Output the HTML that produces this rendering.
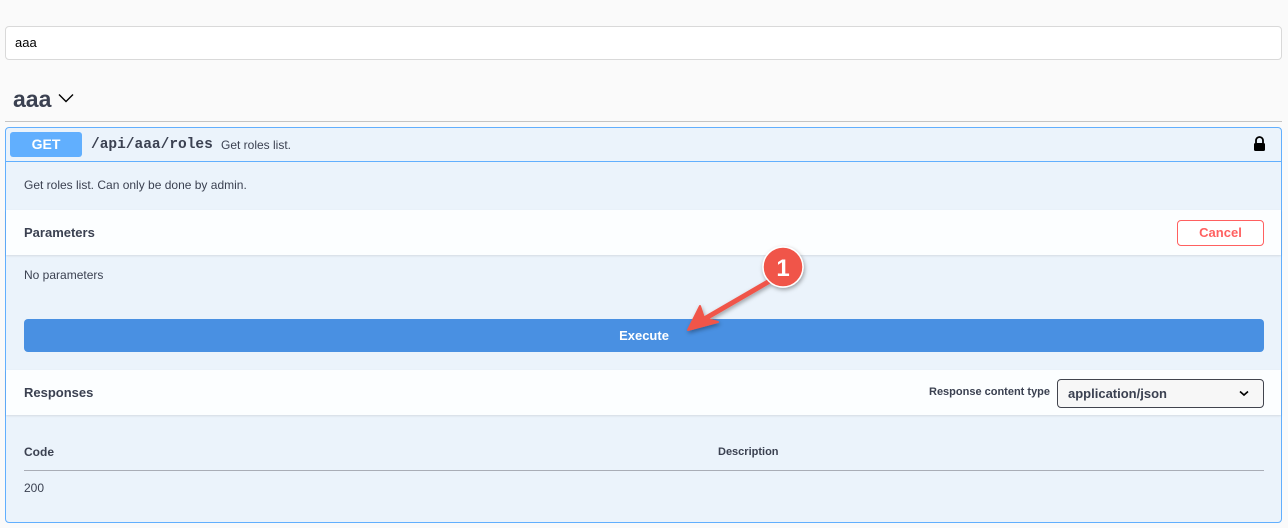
<!DOCTYPE html>
<html><head><meta charset="utf-8"><style>
*{box-sizing:border-box;margin:0;padding:0}
body{width:1288px;height:528px;background:#fafafa;font-family:"Liberation Sans",sans-serif;color:#3b4151;position:relative;overflow:hidden}
.a{position:absolute}
.b{font-weight:bold}
</style></head><body>
<div class="a" style="left:5px;top:26px;width:1277px;height:34px;background:#fff;border:1px solid #d9d9d9;border-radius:4px"></div>
<div class="a" style="left:15px;top:35px;font-size:13px;color:#000">aaa</div>
<div class="a b" style="left:13px;top:86px;font-size:23px">aaa</div>
<svg class="a" style="left:58px;top:93px" width="16" height="10" viewBox="0 0 16 10"><path d="M1 1.5 L8 8.5 L15 1.5" fill="none" stroke="#000" stroke-width="1.4"/></svg>
<div class="a" style="left:5px;top:121px;width:1277px;height:1px;background:#c4c4c4"></div>
<div class="a" style="left:5px;top:127px;width:1277px;height:396px;background:#ebf3fb;border:1px solid #61affe;border-radius:4px"></div>
<div class="a" style="left:6px;top:161px;width:1275px;height:1px;background:#61affe"></div>
<div class="a b" style="left:10px;top:132px;width:72px;height:25px;background:#61affe;border-radius:3px;color:#fff;font-size:14px;text-align:center;line-height:25px">GET</div>
<div class="a b" style="left:91px;top:137px;font-family:'Liberation Mono',monospace;font-size:14.5px">/api/aaa/roles</div>
<div class="a" style="left:221px;top:138px;font-size:12px">Get roles list.</div>
<svg class="a" style="left:1253px;top:136px" width="13" height="16" viewBox="0 0 13 16"><path d="M3 7 V4.5 A3.5 3.5 0 0 1 10 4.5 V7" fill="none" stroke="#000" stroke-width="1.8"/><rect x="1" y="7" width="11" height="8" rx="1.5" fill="#000"/></svg>
<div class="a" style="left:24px;top:178px;font-size:12px">Get roles list. Can only be done by admin.</div>
<div class="a" style="left:6px;top:210px;width:1275px;height:45px;background:rgba(255,255,255,.85);box-shadow:0 1px 2px rgba(0,0,0,.1)"></div>
<div class="a b" style="left:24px;top:225px;font-size:13px">Parameters</div>
<div class="a b" style="left:1177px;top:220px;width:87px;height:26px;border:1px solid #ff6060;border-radius:4px;color:#ff6060;font-size:13px;text-align:center;line-height:24px;background:#fff">Cancel</div>
<div class="a" style="left:24px;top:268px;font-size:12px">No parameters</div>
<div class="a b" style="left:24px;top:319px;width:1240px;height:33px;background:#4990e2;border-radius:4px;color:#fff;font-size:13px;text-align:center;line-height:33px">Execute</div>
<div class="a" style="left:6px;top:370px;width:1275px;height:45px;background:rgba(255,255,255,.85);box-shadow:0 1px 2px rgba(0,0,0,.1)"></div>
<div class="a b" style="left:24px;top:385px;font-size:13px">Responses</div>
<div class="a b" style="left:929px;top:386px;font-size:11px">Response content type</div>
<div class="a b" style="left:1057px;top:379px;width:207px;height:29px;border:1px solid #41444e;border-radius:4px;background:#f7f7f7;font-size:13px;line-height:27px;padding-left:10px">application/json</div>
<svg class="a" style="left:1239px;top:390px" width="10" height="7" viewBox="0 0 10 7"><path d="M1 1.5 L5 5 L9 1.5" fill="none" stroke="#000" stroke-width="1.6"/></svg>
<div class="a b" style="left:24px;top:445px;font-size:12px">Code</div>
<div class="a b" style="left:718px;top:446px;font-size:11px">Description</div>
<div class="a" style="left:24px;top:470px;width:1240px;height:1px;background:#a9adb6"></div>
<div class="a" style="left:24px;top:481px;font-size:12px">200</div>
<svg class="a" style="left:0;top:0" width="1288" height="528">
<defs><filter id="s" x="-50%" y="-50%" width="200%" height="200%"><feDropShadow dx="1" dy="2" stdDeviation="2" flood-color="#000" flood-opacity=".35"/></filter></defs>
<g filter="url(#s)">
<path d="M768 282 L706 318" stroke="#f05548" stroke-width="5" stroke-linecap="round"/>
<path d="M688 330 L700 306 L704 318 L718 322 Z" fill="#f05548" stroke="#f05548" stroke-width="2" stroke-linejoin="round"/>
<circle cx="783" cy="267" r="20" fill="#f05548" stroke="#fff" stroke-width="1.5"/>
</g>
<text x="783" y="276" text-anchor="middle" font-family="Liberation Sans" font-weight="bold" font-size="24" fill="#fff">1</text>
</svg>
</body></html>
